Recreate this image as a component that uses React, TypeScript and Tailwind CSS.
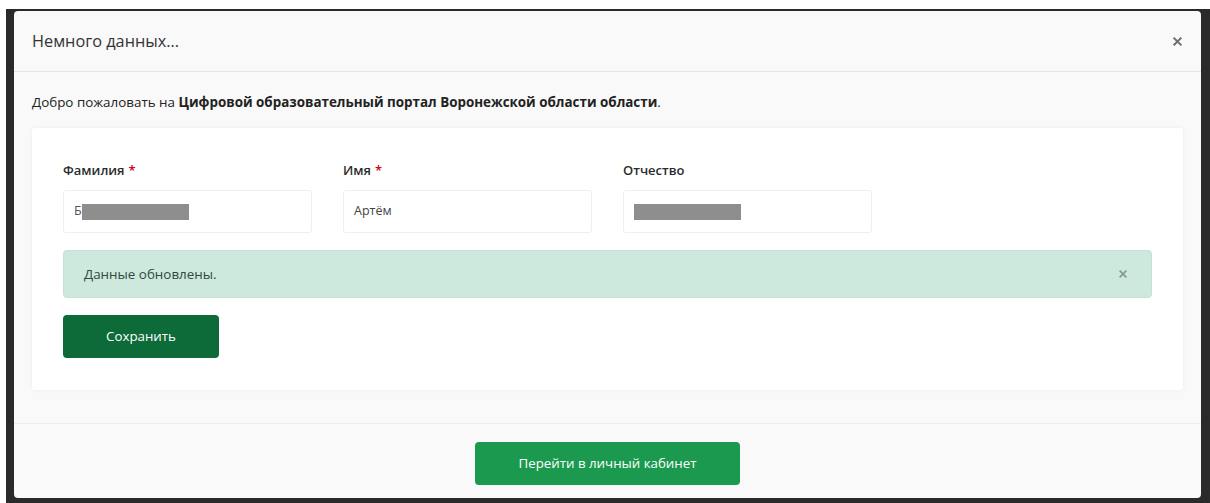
import React from "react";

const font = { fontFamily: '"Open Sans", "Noto Sans", sans-serif' };

function Cross({ size, color }: { size: number; color: string }) {
  return (
    <svg width={size} height={size} viewBox="0 0 10 10" fill="none">
      <path d="M1.5 1.5 L8.5 8.5 M8.5 1.5 L1.5 8.5" stroke={color} strokeWidth={2.2} strokeLinecap="square" />
    </svg>
  );
}

function Field({ label, required, children }: { label: string; required?: boolean; children: React.ReactNode }) {
  return (
    <div className="flex flex-col">
      <div className="h-[18px] text-[13px] leading-[18px] font-semibold text-[#2b2b2b] mb-[11px]">
        {label}
        {required && <span className="text-[#d0021b] ml-[4px]">*</span>}
      </div>
      <div className="h-[43px] bg-white border border-[#efefef] rounded-[3px] flex items-center pl-[10px] text-[12.5px] text-[#444]">
        {children}
      </div>
    </div>
  );
}

function Redacted({ w }: { w: number }) {
  return <span className="inline-block h-[16px] bg-[#8e8e8e]" style={{ width: w }} />;
}

export default function App() {
  return (
    <div className="w-[1210px] h-[503px] bg-white overflow-hidden" style={font}>
      <div className="ml-[6px] mt-[9px] h-[494px] bg-[#2a2a2a] pl-[8px] pt-[2px]">
        <div className="w-[1187px] h-[487px] bg-[#f9f9f9] rounded-[4px] flex flex-col">
          <div className="h-[61px] shrink-0 pl-[18px] pr-[19px] flex items-center justify-between border-b border-[#e4e4e4]">
            <span className="text-[16.3px] text-[#333]">Немного данных...</span>
            <Cross size={9} color="#6f6f6f" />
          </div>
          <div className="px-[18px] pt-[20px]">
            <p className="text-[13.4px] leading-[20px] text-[#222]">
              Добро пожаловать на <b className="font-bold">Цифровой образовательный портал Воронежской области области</b>.
            </p>
            <div className="mt-[16px] bg-white rounded-[3px] shadow-[0_0_4px_rgba(0,0,0,0.06)] px-[31px] pt-[33px] pb-[32px]">
              <div className="grid grid-cols-[249px_249px_249px] gap-x-[31px]">
                <Field label="Фамилия" required>
                  <span className="text-[#555]">Б</span>
                  <Redacted w={107} />
                </Field>
                <Field label="Имя" required>
                  <span>Артём</span>
                </Field>
                <Field label="Отчество">
                  <Redacted w={107} />
                </Field>
              </div>
              <div className="mt-[17px] h-[48px] bg-[#cde8dc] border border-[#c3e2d4] rounded-[4px] flex items-center justify-between pl-[20px] pr-[24px] text-[13.4px] text-[#2f4a3e]">
                <span>Данные обновлены.</span>
                <Cross size={8} color="#839e91" />
              </div>
              <button className="mt-[17px] w-[156px] h-[43px] rounded-[4px] bg-[#0c6b39] text-white text-[13.3px] flex items-center justify-center">
                Сохранить
              </button>
            </div>
          </div>
          <div className="mt-[33px] border-t border-[#ececec] flex justify-center pt-[18px]">
            <button className="w-[265px] h-[43px] rounded-[4px] bg-[#1b9a4f] text-white text-[13.3px] flex items-center justify-center">
              Перейти в личный кабинет
            </button>
          </div>
        </div>
      </div>
    </div>
  );
}
